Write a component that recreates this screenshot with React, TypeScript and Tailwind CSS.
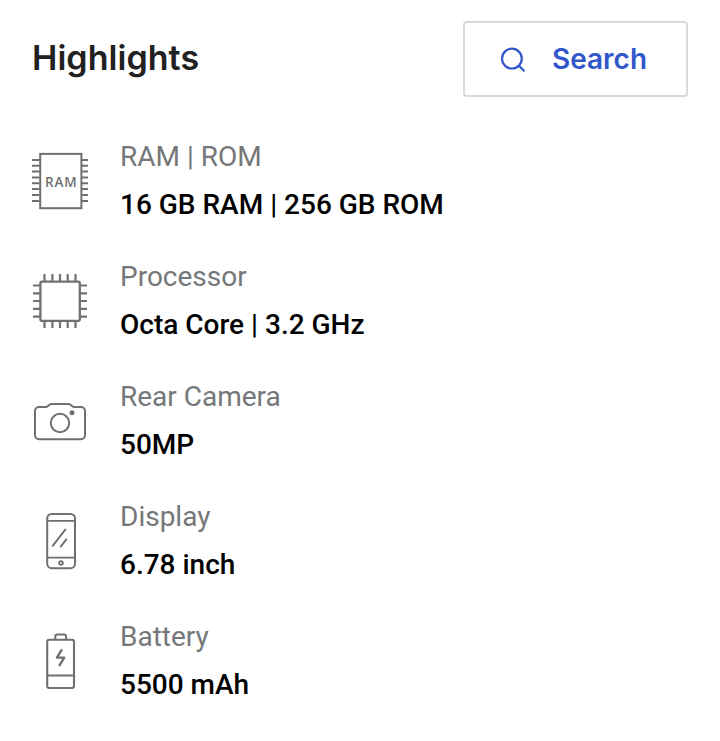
import type { ReactNode } from "react";

const highlights: { label: string; value: string; icon: ReactNode }[] = [
  {
    label: "RAM | ROM",
    value: "16 GB RAM | 256 GB ROM",
    icon: (
      <>
        <rect x="10.2" y="2.9" width="41.2" height="54.3" />
        <path d="M2 9h7.500M2 14.8h7.500M2 20.6h7.500M2 26.4h7.500M2 32.2h7.500M2 38h7.500M2 44h7.500M2 50h7.500M52 9h6M52 14.8h6M52 20.6h6M52 26.4h6M52 32.2h6M52 38h6M52 44h6M52 50h6" />
        <text x="15" y="35.5" textLength="31.600" className="font-['Open_Sans',sans-serif] text-[13.5px] font-semibold" fill="#707070" stroke="none">
          RAM
        </text>
      </>
    ),
  },
  {
    label: "Processor",
    value: "Octa Core | 3.2 GHz",
    icon: (
      <>
        <rect x="10.4" y="10.6" width="39.4" height="39.2" rx="1.5" strokeWidth="2.3" />
        <path d="M14.5 3v7M22.4 3v7M30 3v7M37.7 3v7M45.5 3v7M14.5 50.5v6.5M22.4 50.5v6.5M30 50.5v6.5M37.7 50.5v6.5M45.5 50.5v6.5M3 14.5h7M3 22.3h7M3 30h7M3 37.8h7M3 45.6h7M50.5 14.5H57M50.5 22.3H57M50.5 30H57M50.5 37.8H57M50.5 45.6H57" strokeWidth="2.2" />
      </>
    ),
  },
  {
    label: "Rear Camera",
    value: "50MP",
    icon: (
      <>
        <path d="M9 16h6.500c1.200 0 2-.6 2.800-1.300.9-.9 1.900-1.600 3.300-1.600h16.800c1.400 0 2.400.7 3.300 1.600.8.700 1.600 1.300 2.800 1.300H51a4 4 0 0 1 4 4v24.200a4 4 0 0 1-4 4H9a4 4 0 0 1-4-4V20a4 4 0 0 1 4-4z" />
        <circle cx="30" cy="32" r="9.2" />
        <circle cx="42" cy="21.8" r="2.5" fill="#707070" stroke="none" />
      </>
    ),
  },
  {
    label: "Display",
    value: "6.78 inch",
    icon: (
      <>
        <rect x="17.2" y="3" width="27.800" height="54.2" rx="4.5" />
        <path d="M17.2 9.9H45M17.2 46.700H45" strokeWidth="1.8" />
        <path d="M35.3 18.6 22.7 34.8M36.3 28.3 30.7 35.6" strokeWidth="1.9" strokeLinecap="round" />
        <circle cx="31" cy="51.900" r="1.800" strokeWidth="1.9" />
      </>
    ),
  },
  {
    label: "Battery",
    value: "5500 mAh",
    icon: (
      <>
        <rect x="17.2" y="8.8" width="26.8" height="48.2" rx="2" strokeWidth="2.1" />
        <path d="M25.3 8.500V5.500a2 2 0 0 1 2-2h6.800a2 2 0 0 1 2 2V8.500M17.2 44.500H44" />
        <path d="M31.5 19.2 26.9 26.6h7.300L29.6 34.2" strokeWidth="2.4" strokeLinecap="round" strokeLinejoin="round" />
      </>
    ),
  },
];

export default function App() {
  return (
    <main className="h-[741px] w-[720px] bg-white px-8 pt-[21px] font-['Roboto',sans-serif]">
      <header className="flex h-[76px] items-center justify-between">
        <h1 className="pb-0.5 font-['Inter',sans-serif] text-[34px] font-semibold leading-none tracking-[0.05px] text-[#212121]">Highlights</h1>
        <button className="flex h-[76px] w-[225px] items-center rounded-[4px] border-2 border-[#d8d9d9] pl-[34px] text-[#3157ca]">
          <svg className="h-7 w-7" viewBox="0 0 28 28" fill="none" stroke="currentColor" strokeWidth="2.2">
            <circle cx="12.9" cy="13.6" r="9.9" />
            <path d="m20 20.700 5.500 5.500" />
          </svg>
          <span className="ml-[25px] font-['Inter',sans-serif] text-[28px] font-semibold leading-none">Search</span>
        </button>
      </header>
      <ul className="mt-9 flex flex-col gap-6">
        {highlights.map(({ label, value, icon }) => (
          <li key={label} className="flex h-24 items-center">
            <svg className="-ml-0.5 h-[60px] w-[60px] shrink-0" viewBox="0 0 60 60" fill="none" stroke="#707070" strokeWidth="2">
              {icon}
            </svg>
            <div className="ml-[30px] text-[28px] leading-[48px]">
              <p className="text-[#757778]">{label}</p>
              <p className="font-medium text-black">{value}</p>
            </div>
          </li>
        ))}
      </ul>
    </main>
  );
}
